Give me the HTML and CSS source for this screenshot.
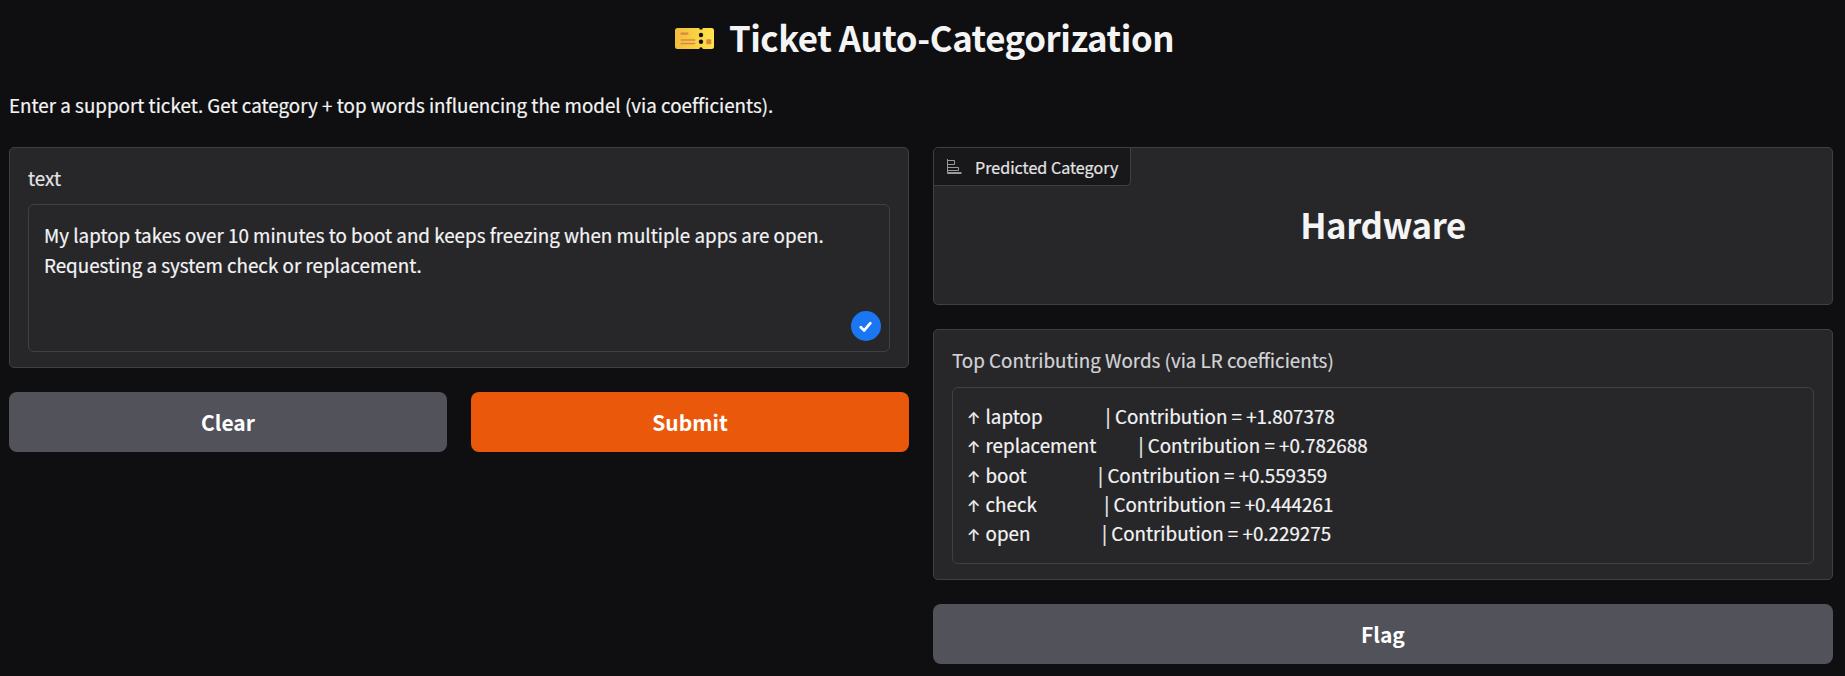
FILE: index.html
```
<!DOCTYPE html>
<html lang="en">
<head>
<meta charset="utf-8">
<title>Ticket Auto-Categorization</title>
<link rel="stylesheet" href="styles.css">
</head>
<body>
<main class="app">
  <h1 class="title">
    <svg class="ticket" width="39" height="21" viewBox="0 0 39 21">
      <defs><linearGradient id="gold" x1="0" y1="0" x2="1" y2="0"><stop offset="0" stop-color="#f3bb3e"/><stop offset="1" stop-color="#ffe44a"/></linearGradient></defs>
      <rect width="39" height="21" rx="2.5" fill="url(#gold)"/>
      <g fill="#0f0f11"><circle cx="26" cy="0" r="1.8"/><circle cx="26" cy="7" r="2.2"/><circle cx="26" cy="13.8" r="2.2"/><circle cx="26" cy="21" r="1.8"/></g>
      <g fill="#dd8544"><rect x="5.5" y="4.5" width="8" height="2.2" rx="1"/><rect x="5.5" y="11.2" width="15" height="1.6" rx=".8"/><rect x="5.5" y="14.7" width="15" height="1.6" rx=".8"/><rect x="31.3" y="11.2" width="5" height="5" rx=".8"/></g>
    </svg>
    <span class="title-text">Ticket Auto-Categorization</span>
  </h1>
  <p class="description">Enter a support ticket. Get category + top words influencing the model (via coefficients).</p>
  <div class="columns">
    <section class="column">
      <div class="panel input-panel">
        <div class="label">text</div>
        <div class="field input-field">
          <div class="line">My laptop takes over 10 minutes to boot and keeps freezing when multiple apps are open.</div>
          <div class="line">Requesting a system check or replacement.</div>
          <svg class="check" width="30" height="30" viewBox="0 0 30 30"><circle cx="15" cy="15" r="15" fill="#1a76f2"/><path d="M9.800 16.200l3.400 3.200 6.200-7.200" fill="none" stroke="#fff" stroke-width="2.8" stroke-linecap="round" stroke-linejoin="round"/></svg>
        </div>
      </div>
      <div class="buttons">
        <button class="button">Clear</button>
        <button class="button primary">Submit</button>
      </div>
    </section>
    <section class="column">
      <div class="panel category-panel">
        <div class="tag">
          <svg width="15" height="15" viewBox="0 0 15 15" fill="none" stroke="#98989d" stroke-width="1"><path d="M.5 0v14.500M.5 1.500h7v4h-7M.5 8.500h11v3H.5M.5 13.500h14M.5 14.500h14"/></svg>
          <span>Predicted Category</span>
        </div>
        <h2 class="category">Hardware</h2>
      </div>
      <div class="panel words-panel">
        <div class="label">Top Contributing Words (via LR coefficients)</div>
        <div class="field words-field">
          <div class="line"><span class="arrow">↑</span>laptop               | Contribution = +1.807378</div>
          <div class="line"><span class="arrow">↑</span>replacement          | Contribution = +0.782688</div>
          <div class="line"><span class="arrow">↑</span>boot                 | Contribution = +0.559359</div>
          <div class="line"><span class="arrow">↑</span>check                | Contribution = +0.444261</div>
          <div class="line"><span class="arrow">↑</span>open                 | Contribution = +0.229275</div>
        </div>
      </div>
      <button class="button">Flag</button>
    </section>
  </div>
</main>
</body>
</html>
```
FILE: styles.css
```
* { box-sizing: border-box; }
body {
  margin: 0;
  background: #0f0f11;
  color: #f4f4f5;
  font: 400 18.8px/30px "Noto Sans CJK SC", sans-serif;
}
.app { padding: 0 12px 12px 9px; height: 676px; overflow: hidden; }
.title {
  display: flex;
  justify-content: center;
  gap: 15px;
  margin: 0;
  padding: 12px 0 0 7px;
  height: 90px;
  font-size: 34.8px;
  line-height: 50px;
  font-weight: 600;
  letter-spacing: -.44px;
}
.ticket { margin-top: 16px; }
.description { margin: 0; height: 57px; white-space: nowrap; letter-spacing: .01px; }
.description, .label, .line, .tag { -webkit-text-stroke: .2px currentColor; }
.columns { display: grid; grid-template-columns: 1fr 1fr; gap: 24px; }
.column { display: flex; flex-direction: column; gap: 24px; }
.panel {
  background: #27272a;
  border: 1px solid #3f3f46;
  border-radius: 5px;
  padding: 15px 18px;
}
.input-panel { height: 221px; }
.category-panel { height: 158px; padding: 0; }
.words-panel { height: 251px; }
.label { height: 41px; line-height: 30px; color: #e4e4e7; }
.words-panel .label { height: 42px; color: #d4d4d8; }
.field {
  position: relative;
  border: 1px solid #3f3f46;
  border-radius: 6px;
  padding: 15px;
}
.line { white-space: pre; }
.input-field { height: 148px; }
.words-field { height: 177px; padding-top: 13px; line-height: 29.3px; }
.check { position: absolute; right: 8px; bottom: 10px; }
.buttons { display: grid; grid-template-columns: 1fr 1fr; gap: 24px; }
.button {
  height: 60px;
  border: 0;
  border-radius: 8px;
  background: #52525b;
  color: #fff;
  font: 600 21px/30px "Noto Sans CJK SC", sans-serif;
}
.primary { background: #ea580c; }
.tag {
  display: flex;
  align-items: center;
  gap: 13px;
  width: 197px;
  height: 38px;
  padding-left: 13px;
  border-right: 1px solid #3f3f46;
  border-bottom: 1px solid #3f3f46;
  border-radius: 4px 0 5px 0;
  background: #18181b;
  color: #e4e4e7;
  font-size: 16.1px;
  white-space: nowrap;
}
.category {
  margin: 13px 0 0;
  text-align: center;
  font-size: 34.8px;
  line-height: 50px;
  font-weight: 600;
  letter-spacing: -.44px;
}
.arrow { display: inline-block; width: 17.5px; text-indent: -1px; font: 400 16px/20px Inter, sans-serif; }
```
